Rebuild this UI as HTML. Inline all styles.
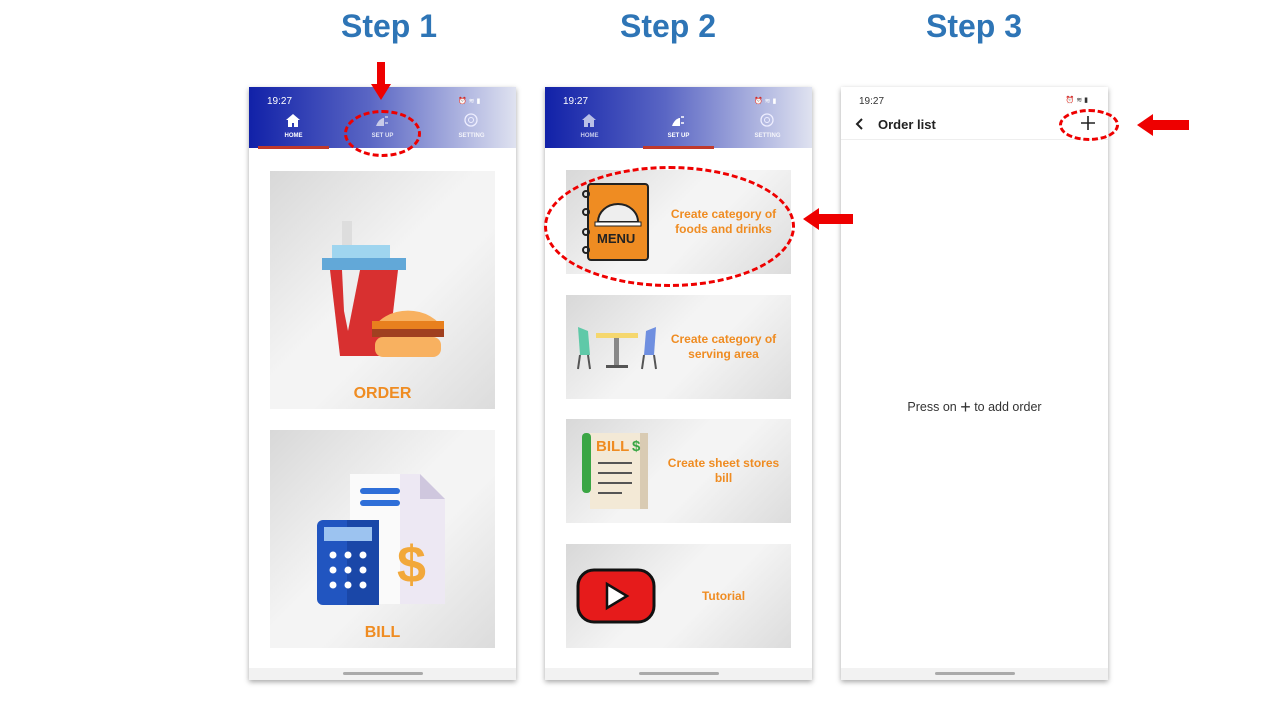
<!DOCTYPE html>
<html><head><meta charset="utf-8"><style>
*{margin:0;padding:0;box-sizing:border-box}
body{width:1280px;height:720px;background:#fff;position:relative;font-family:"Liberation Sans",sans-serif;overflow:hidden}
.step{position:absolute;top:8px;font:bold 32px "Liberation Sans",sans-serif;color:#2e75b6}
.phone{position:absolute;top:87px;width:267px;height:593px;background:#fff;box-shadow:0 2px 5px rgba(0,0,0,.35)}
.hdr{position:absolute;left:0;top:0;width:267px;height:61px;background:linear-gradient(90deg,#1121a8,#5a66c4 45%,#dfe2f0)}
.time{position:absolute;left:18px;top:9px;font-size:10px;color:#fff}
.tab{position:absolute;top:46px;width:89px;text-align:center;font-size:6px;font-weight:bold;color:#fff}
.ul{position:absolute;top:59px;height:3px;width:71px;background:#c0392b}
.bot{position:absolute;left:0;bottom:0;width:267px;height:12px;background:#f2f2f2}
.bot:after{content:"";position:absolute;left:94px;top:4px;width:80px;height:3px;border-radius:2px;background:#aaa}
.card{position:absolute;left:21px;width:225px;background:linear-gradient(135deg,#d8d8d8 0%,#f4f4f4 45%,#f4f4f4 60%,#dcdcdc 100%)}
.lbl{position:absolute;color:#ef8c22;font-weight:bold;text-align:center}
.ct{position:absolute;left:100px;width:115px;top:0;height:104px;display:flex;align-items:center;justify-content:center;text-align:center;color:#ef8c22;font-weight:bold;font-size:12px;line-height:15px}
.dash{position:absolute;border:3px dashed #e00;border-radius:50%}
</style></head><body>
<div class="step" style="left:341px">Step 1</div>
<div class="step" style="left:620px">Step 2</div>
<div class="step" style="left:926px">Step 3</div>

<!-- phone 1 -->
<div class="phone" style="left:249px">
 <div class="hdr"><div class="time">19:27</div>
  <svg style="position:absolute;left:37px;top:27px" width="14" height="13"><path d="M7 0L0 6h2v7h4V9h2v4h4V6h2z" fill="#fff"/></svg>
  <svg style="position:absolute;left:126px;top:27px" width="16" height="13"><path d="M1 12Q3 6 8 4l1 0v8z" fill="#c8cbe8"/><path d="M10 3h3M10 9h3" stroke="#c8cbe8" stroke-width="1.5"/></svg>
  <svg style="position:absolute;left:214px;top:25px" width="16" height="16"><circle cx="8" cy="8" r="6" fill="none" stroke="#eef" stroke-width="1.3"/><circle cx="8" cy="8" r="2.5" fill="none" stroke="#eef"/></svg>
  <div class="tab" style="left:0">HOME</div><div class="tab" style="left:89px;color:#e0e3f5">SET UP</div><div class="tab" style="left:178px;color:#f5f5fa">SETTING</div>
  <div style="position:absolute;right:18px;top:10px;width:40px;height:8px;font-size:7px;color:#fff">⏰ ≋ ▮</div>
 </div>
 <div class="ul" style="left:9px"></div>
 <div class="card" style="top:84px;height:238px">
  <svg style="position:absolute;left:50px;top:50px" width="125" height="140">
   <rect x="22" y="0" width="10" height="25" fill="#ddd"/>
   <rect x="12" y="24" width="58" height="13" fill="#9fd5ef"/>
   <rect x="2" y="37" width="84" height="12" fill="#62a8d8"/>
   <path d="M10 49h68l-10 86H20z" fill="#d83030"/>
   <path d="M22 49h18L28 110l-4-20z" fill="#eee"/>
   <path d="M52 110A38 30 0 0 1 124 110z" fill="#f8b160"/>
   <rect x="52" y="100" width="72" height="8" fill="#e8801e"/>
   <rect x="52" y="108" width="72" height="8" fill="#a04020"/>
   <rect x="55" y="116" width="66" height="20" rx="8" fill="#f8b160"/>
  </svg>
  <div class="lbl" style="left:0;width:225px;top:214px;font-size:16px">ORDER</div>
 </div>
 <div class="card" style="top:343px;height:218px">
  <svg style="position:absolute;left:45px;top:40px" width="140" height="140">
   <path d="M35 4h70l25 25v105H35z" fill="#ede8f3"/><path d="M105 4v25h25z" fill="#cfc7de"/>
   <path d="M35 4h50v130H35z" fill="#fafafa"/>
   <rect x="45" y="18" width="40" height="6" rx="3" fill="#2f6fd8"/><rect x="45" y="30" width="40" height="6" rx="3" fill="#2f6fd8"/>
   <text x="82" y="112" font-size="52" font-weight="bold" fill="#f2a83a" font-family="Liberation Sans">$</text>
   <rect x="2" y="50" width="62" height="85" rx="6" fill="#2155c0"/><rect x="32" y="50" width="32" height="85" rx="0" fill="#1a47a8"/>
   <rect x="9" y="57" width="48" height="14" fill="#9cc3f0"/>
   <g fill="#fff"><circle cx="18" cy="85" r="3.5"/><circle cx="33" cy="85" r="3.5"/><circle cx="48" cy="85" r="3.5"/><circle cx="18" cy="100" r="3.5"/><circle cx="33" cy="100" r="3.5"/><circle cx="48" cy="100" r="3.5"/><circle cx="18" cy="115" r="3.5"/><circle cx="33" cy="115" r="3.5"/><circle cx="48" cy="115" r="3.5"/></g>
  </svg>
  <div class="lbl" style="left:0;width:225px;top:194px;font-size:16px">BILL</div>
 </div>
 <div class="bot"></div>
</div>
<div class="dash" style="left:344px;top:110px;width:77px;height:47px"></div>
<svg style="position:absolute;left:371px;top:62px" width="20" height="40"><rect x="6" y="0" width="8" height="24" fill="#e00"/><path d="M0 22h20L10 38z" fill="#e00"/></svg>

<!-- phone 2 -->
<div class="phone" style="left:545px">
 <div class="hdr"><div class="time">19:27</div>
  <svg style="position:absolute;left:37px;top:27px" width="14" height="13"><path d="M7 0L0 6h2v7h4V9h2v4h4V6h2z" fill="#b9bfe6"/></svg>
  <svg style="position:absolute;left:126px;top:27px" width="16" height="13"><path d="M1 12Q3 6 8 4l1 0v8z" fill="#fff"/><path d="M10 3h3M10 9h3" stroke="#fff" stroke-width="1.5"/></svg>
  <svg style="position:absolute;left:214px;top:25px" width="16" height="16"><circle cx="8" cy="8" r="6" fill="none" stroke="#eef" stroke-width="1.3"/><circle cx="8" cy="8" r="2.5" fill="none" stroke="#eef"/></svg>
  <div class="tab" style="left:0;color:#c7cbec">HOME</div><div class="tab" style="left:89px">SET UP</div><div class="tab" style="left:178px;color:#f5f5fa">SETTING</div>
  <div style="position:absolute;right:18px;top:10px;width:40px;height:8px;font-size:7px;color:#fff">⏰ ≋ ▮</div>
 </div>
 <div class="ul" style="left:98px"></div>
 <div class="card" style="top:83px;height:104px">
  <svg style="position:absolute;left:16px;top:12px" width="70" height="80"><rect x="6" y="2" width="60" height="76" rx="3" fill="#ef8c22" stroke="#222" stroke-width="2"/><path d="M16 40a20 18 0 0 1 40 0z" fill="#eee" stroke="#222" stroke-width="2"/><rect x="13" y="40" width="46" height="4" fill="#fff" stroke="#222"/><text x="15" y="61" font-size="13" font-weight="bold" font-family="Liberation Sans" fill="#222">MENU</text><g fill="none" stroke="#222" stroke-width="2"><circle cx="4" cy="12" r="3"/><circle cx="4" cy="30" r="3"/><circle cx="4" cy="50" r="3"/><circle cx="4" cy="68" r="3"/></g></svg>
  <div class="ct">Create category of foods and drinks</div>
 </div>
 <div class="card" style="top:208px;height:104px">
  <svg style="position:absolute;left:8px;top:28px" width="86" height="48"><path d="M4 4l10 4 2 24H6z" fill="#5fc9a8"/><path d="M82 4l-10 4-2 24h10z" fill="#6f8fe0"/><rect x="22" y="10" width="42" height="5" fill="#f5d76e"/><rect x="40" y="15" width="5" height="28" fill="#888"/><rect x="32" y="42" width="22" height="3" fill="#555"/><path d="M6 32l-2 14M14 32l2 14M70 32l-2 14M80 32l2 14" stroke="#555" stroke-width="2"/></svg>
  <div class="ct">Create category of serving area</div>
 </div>
 <div class="card" style="top:332px;height:104px">
  <svg style="position:absolute;left:14px;top:12px" width="72" height="80"><rect x="10" y="2" width="58" height="76" fill="#f3e9d6"/><rect x="60" y="2" width="8" height="76" fill="#d9cbb3"/><rect x="2" y="2" width="9" height="60" rx="4" fill="#3aa645"/><text x="16" y="20" font-size="15" font-weight="bold" fill="#ef8c22" font-family="Liberation Sans">BILL</text><text x="52" y="20" font-size="15" font-weight="bold" fill="#3aa645" font-family="Liberation Sans">$</text><g stroke="#555" stroke-width="2"><path d="M18 32h34M18 42h34M18 52h34M18 62h24"/></g></svg>
  <div class="ct">Create sheet stores bill</div>
 </div>
 <div class="card" style="top:457px;height:104px">
  <svg style="position:absolute;left:10px;top:24px" width="80" height="56"><rect x="2" y="2" width="76" height="52" rx="16" fill="#e61b1b" stroke="#111" stroke-width="3"/><path d="M31 16v24l20-12z" fill="#fff" stroke="#111" stroke-width="2.5"/></svg>
  <div class="ct">Tutorial</div>
 </div>
 <div class="bot"></div>
</div>
<div class="dash" style="left:544px;top:166px;width:251px;height:121px"></div>

<!-- phone 3 -->
<div class="phone" style="left:841px">
 <div style="position:absolute;left:18px;top:9px;font-size:10px;color:#333">19:27</div>
 <div style="position:absolute;right:20px;top:9px;font-size:7px;color:#333">⏰ ≋ ▮</div>
 <svg style="position:absolute;left:14px;top:30px" width="10" height="14"><path d="M7 2L2 7l5 5" fill="none" stroke="#222" stroke-width="2"/></svg>
 <div style="position:absolute;left:37px;top:30px;font-size:13px;font-weight:bold;color:#222">Order list</div>
 <svg style="position:absolute;left:240px;top:29px" width="14" height="14"><path d="M7 0v14M0 7h14" stroke="#222" stroke-width="1.6"/></svg>
 <div style="position:absolute;left:0;top:52px;width:267px;height:1px;background:#eee"></div>
 <div style="position:absolute;left:0;top:310px;width:267px;text-align:center;font-size:12.5px;color:#333">Press on <span style="font-size:18px;vertical-align:-2px">+</span> to add order</div>
 <div class="bot"></div>
</div>
<svg style="position:absolute;left:803px;top:208px" width="50" height="22"><path d="M0 11L16 0v6h34v10H16v6z" fill="#e00"/></svg>
<div class="dash" style="left:1059px;top:109px;width:60px;height:32px"></div>
<svg style="position:absolute;left:1137px;top:114px" width="52" height="22"><path d="M0 11L16 0v6h36v10H16v6z" fill="#e00"/></svg>
</body></html>
